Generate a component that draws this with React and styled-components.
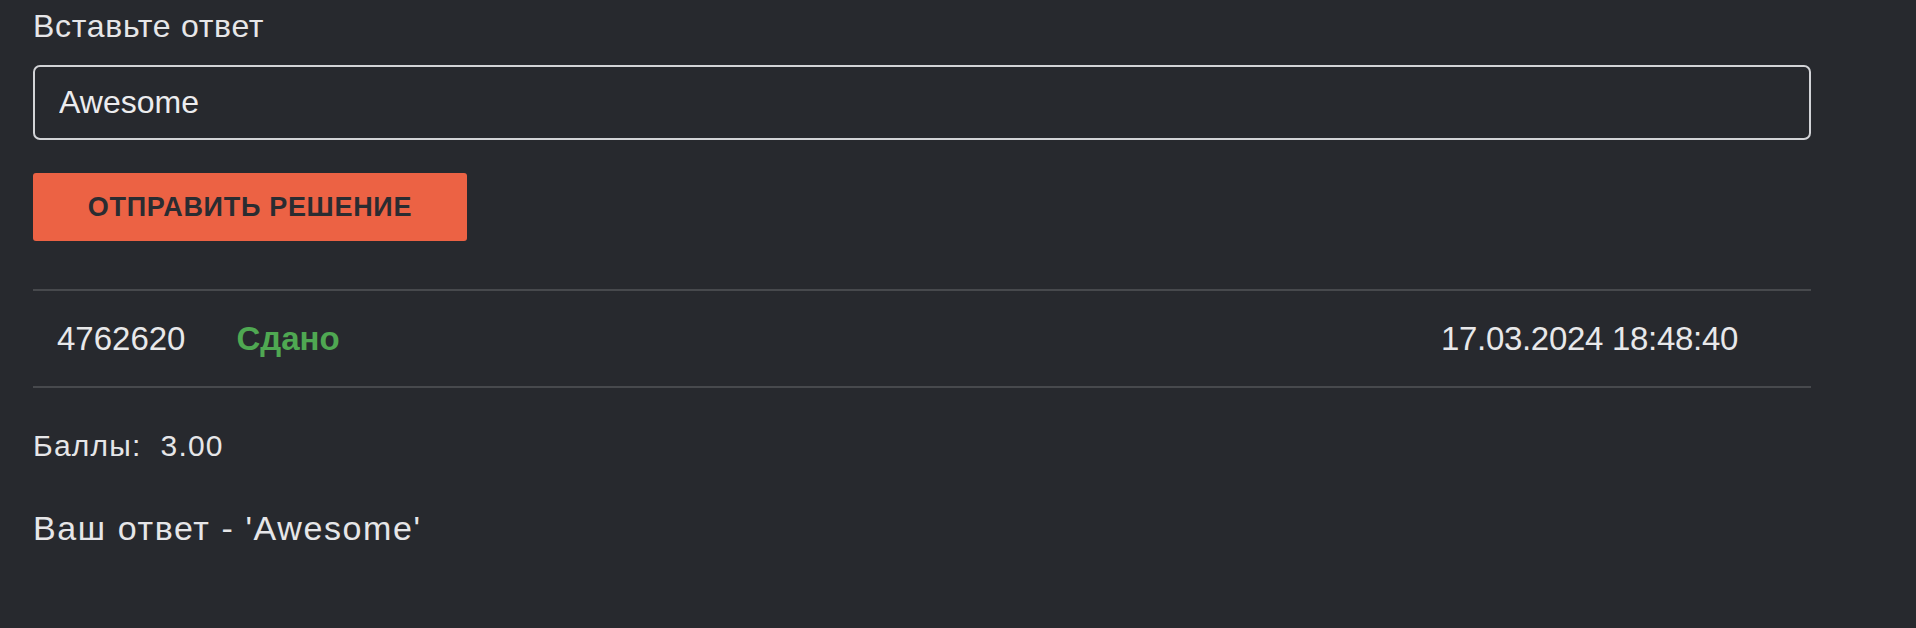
import React, { useState } from 'react';
import styled, { createGlobalStyle } from 'styled-components';

const GlobalStyle = createGlobalStyle`
  html, body {
    margin: 0;
    padding: 0;
    background: #27292e;
  }
  body {
    font-family: "Liberation Sans", Arial, sans-serif;
    color: #e6e6e8;
  }
`;

const Page = styled.div`
  min-height: 628px;
  padding: 7px 0 0 33px;
  box-sizing: border-box;
  background: #27292e;
`;

const Form = styled.div`
  width: 1778px;
`;

const Label = styled.div`
  font-size: 32px;
  line-height: 1.2;
  letter-spacing: 0.7px;
  margin-bottom: 20px;
`;

const AnswerInput = styled.input`
  display: block;
  width: 100%;
  height: 75px;
  box-sizing: border-box;
  padding: 0 24px;
  background: transparent;
  border: 2px solid #d2d3d7;
  border-radius: 7px;
  color: #ececee;
  font-family: inherit;
  font-size: 32px;
  line-height: 1.2;
  outline: none;
`;

const SubmitButton = styled.button`
  display: block;
  margin-top: 33px;
  width: 434px;
  height: 68px;
  border: none;
  border-radius: 3px;
  background: #ec6244;
  color: #2a2c31;
  font-family: inherit;
  font-size: 27px;
  font-weight: 700;
  line-height: 1.2;
  letter-spacing: 0.7px;
  text-transform: uppercase;
  cursor: pointer;
`;

const Attempt = styled.div`
  margin-top: 48px;
  height: 99px;
  box-sizing: border-box;
  border-top: 2px solid #47494d;
  border-bottom: 2px solid #47494d;
  display: flex;
  align-items: center;
  padding: 0 73px 0 24px;
  font-size: 33px;
  line-height: 1.2;
`;

const AttemptId = styled.span`
  color: #e8e8ea;
`;

const Status = styled.span`
  margin-left: 51px;
  font-weight: 700;
  color: ${p => (p.$ok ? '#4fa852' : '#e0533d')};
`;

const Stamp = styled.span`
  margin-left: auto;
  letter-spacing: -0.3px;
  color: #e8e8ea;
`;

const Score = styled.div`
  margin-top: 40px;
  font-size: 30px;
  line-height: 1.2;
  letter-spacing: 1.2px;
  white-space: pre;
`;

const Feedback = styled.div`
  margin-top: 44px;
  font-size: 34px;
  line-height: 1.2;
  letter-spacing: 1.6px;
  white-space: pre;
`;

export default function App() {
  const [answer, setAnswer] = useState('Awesome');

  return (
    <Page>
      <GlobalStyle />
      <Form>
        <Label>Вставьте ответ</Label>
        <AnswerInput value={answer} onChange={e => setAnswer(e.target.value)} />
        <SubmitButton>Отправить решение</SubmitButton>
        <Attempt>
          <AttemptId>4762620</AttemptId>
          <Status $ok>Сдано</Status>
          <Stamp>17.03.2024 18:48:40</Stamp>
        </Attempt>
        <Score>{'Баллы:  3.00'}</Score>
        <Feedback>{"Ваш ответ - 'Awesome'"}</Feedback>
      </Form>
    </Page>
  );
}
